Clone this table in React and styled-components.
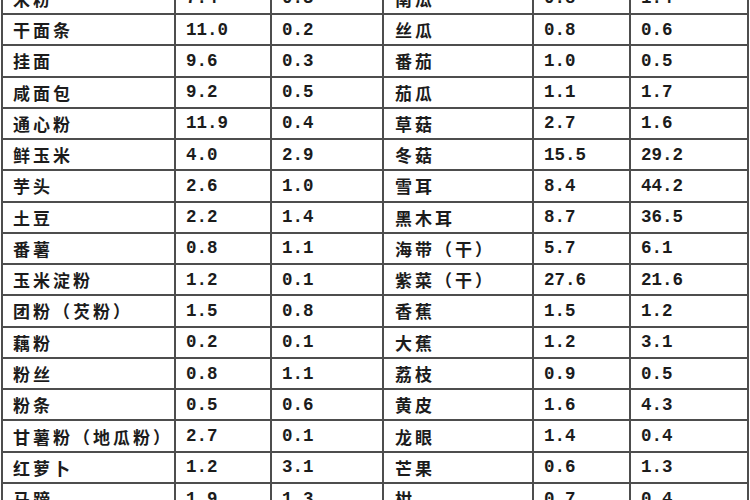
import styled, { createGlobalStyle } from 'styled-components';

const GlobalStyle = createGlobalStyle`
    html, body {
        margin: 0;
        padding: 0;
        background: #FFFFFF;
        overflow: hidden;
    }
`;

const rows = [
    ["米粉", "7.4", "0.3", "南瓜", "0.8", "1.4"],
    ["干面条", "11.0", "0.2", "丝瓜", "0.8", "0.6"],
    ["挂面", "9.6", "0.3", "番茄", "1.0", "0.5"],
    ["咸面包", "9.2", "0.5", "茄瓜", "1.1", "1.7"],
    ["通心粉", "11.9", "0.4", "草菇", "2.7", "1.6"],
    ["鲜玉米", "4.0", "2.9", "冬菇", "15.5", "29.2"],
    ["芋头", "2.6", "1.0", "雪耳", "8.4", "44.2"],
    ["土豆", "2.2", "1.4", "黑木耳", "8.7", "36.5"],
    ["番薯", "0.8", "1.1", "海带（干）", "5.7", "6.1"],
    ["玉米淀粉", "1.2", "0.1", "紫菜（干）", "27.6", "21.6"],
    ["团粉（芡粉）", "1.5", "0.8", "香蕉", "1.5", "1.2"],
    ["藕粉", "0.2", "0.1", "大蕉", "1.2", "3.1"],
    ["粉丝", "0.8", "1.1", "荔枝", "0.9", "0.5"],
    ["粉条", "0.5", "0.6", "黄皮", "1.6", "4.3"],
    ["甘薯粉（地瓜粉）", "2.7", "0.1", "龙眼", "1.4", "0.4"],
    ["红萝卜", "1.2", "3.1", "芒果", "0.6", "1.3"],
    ["马蹄", "1.9", "1.3", "柑", "0.7", "0.4"],
];

export default function App() {
    return (
        <>
            <GlobalStyle />
            <Sheet>
                {rows.map((row, i) =>
                    row.map((value, j) => (
                        j % 3 === 0
                            ? <NameCell key={`${i}-${j}`} $right={j === 3}>{value}</NameCell>
                            : <NumberCell key={`${i}-${j}`}>{value}</NumberCell>
                    ))
                )}
            </Sheet>
        </>
    );
}

const Sheet = styled.div`
    display: grid;
    grid-template-columns: 171px 94px 110px 148px 95px 116px;
    grid-auto-rows: 29.27px;
    gap: 2px;
    padding: 2px;
    width: max-content;
    margin: -18.3px 0 0 1px;
    background: #4d4d4d;
`;

const Cell = styled.div`
    background: #FFFFFF;
    display: flex;
    align-items: center;
    color: #1c1c1c;
    white-space: nowrap;
    overflow: hidden;
`;

const NameCell = styled(Cell)`
    padding-left: ${props => props.$right ? "11px" : "10px"};
    font-family: "Noto Sans CJK SC", sans-serif;
    font-weight: 700;
    font-size: 17px;
    letter-spacing: 3px;
`;

const NumberCell = styled(Cell)`
    padding-left: 10px;
    font-family: "Liberation Mono", monospace;
    font-weight: 700;
    font-size: 17.5px;
`;
